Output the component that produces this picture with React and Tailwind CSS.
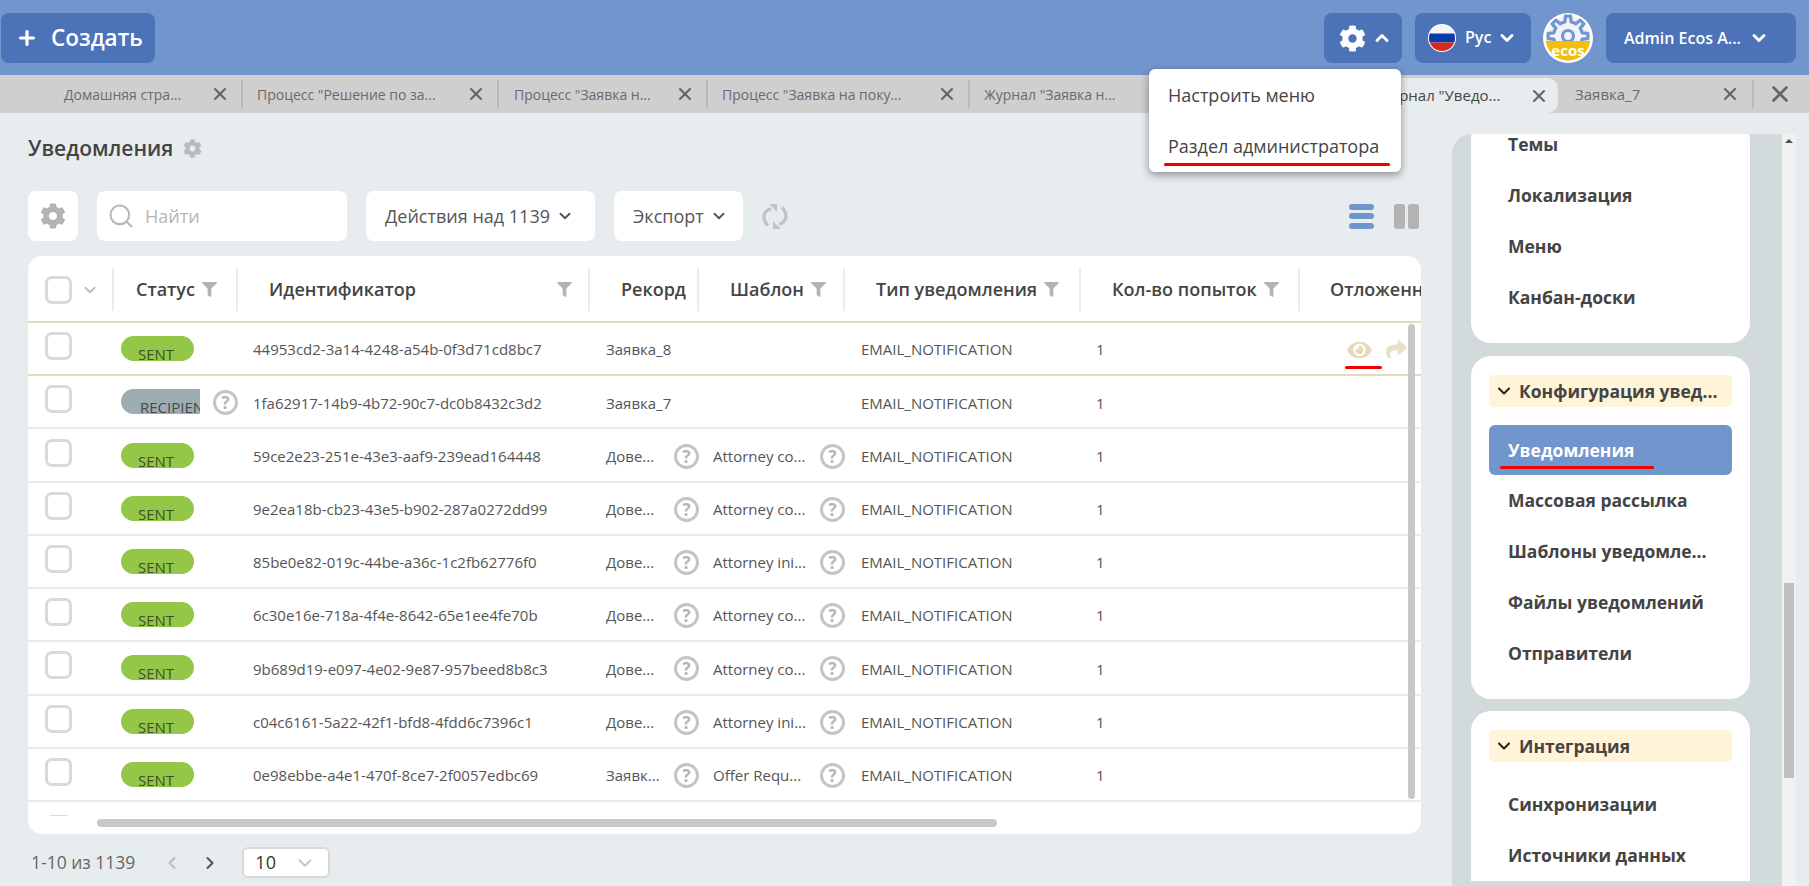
import React from "react";
import { FaCog, FaFilter, FaShare, FaEye } from "react-icons/fa";
import { ChevronDown, ChevronUp, ChevronLeft, ChevronRight, Plus, X, Search } from "lucide-react";

const FONT = { fontFamily: '"Open Sans", "Noto Sans", sans-serif' };

const COLS = "grid grid-cols-[86px_124px_352px_109px_146px_236px_219px_121px]";

const tabs = [
  { t: 'Домашняя стра...', w: "w-[243px]", pl: "pl-[64px]", x: "ml-auto mr-[11px]" },
  { t: 'Процесс "Решение по за...', w: "w-[256px]", pl: "pl-[14px]", x: "ml-auto mr-[11px]" },
  { t: 'Процесс "Заявка н...', w: "w-[209px]", pl: "pl-[15px]", x: "ml-auto mr-[11px]" },
  { t: 'Процесс "Заявка на поку...', w: "w-[262px]", pl: "pl-[14px]", x: "ml-auto mr-[11px]" },
  { t: 'Журнал "Заявка н...', w: "w-[395px]", pl: "pl-[14px]", x: "hidden" },
];

const rows = [
  { st: "SENT", id: "44953cd2-3a14-4248-a54b-0f3d71cd8bc7", rec: "Заявка_8", tpl: "", hi: true },
  { st: "RECIPIEN", id: "1fa62917-14b9-4b72-90c7-dc0b8432c3d2", rec: "Заявка_7", tpl: "" },
  { st: "SENT", id: "59ce2e23-251e-43e3-aaf9-239ead164448", rec: "Дове...", tpl: "Attorney co...", q: true },
  { st: "SENT", id: "9e2ea18b-cb23-43e5-b902-287a0272dd99", rec: "Дове...", tpl: "Attorney co...", q: true },
  { st: "SENT", id: "85be0e82-019c-44be-a36c-1c2fb62776f0", rec: "Дове...", tpl: "Attorney ini...", q: true },
  { st: "SENT", id: "6c30e16e-718a-4f4e-8642-65e1ee4fe70b", rec: "Дове...", tpl: "Attorney co...", q: true },
  { st: "SENT", id: "9b689d19-e097-4e02-9e87-957beed8b8c3", rec: "Дове...", tpl: "Attorney co...", q: true },
  { st: "SENT", id: "c04c6161-5a22-42f1-bfd8-4fdd6c7396c1", rec: "Дове...", tpl: "Attorney ini...", q: true },
  { st: "SENT", id: "0e98ebbe-a4e1-470f-8ce7-2f0057edbc69", rec: "Заявк...", tpl: "Offer Requ...", q: true },
];

function gearPath(cx, cy, rO, rI, teeth) {
  const pts = [];
  const step = (Math.PI * 2) / teeth;
  for (let i = 0; i < teeth; i++) {
    const a = i * step - Math.PI / 2;
    const p = (r, d) => `${(cx + r * Math.cos(a + d * step)).toFixed(2)} ${(cy + r * Math.sin(a + d * step)).toFixed(2)}`;
    pts.push(p(rI, -0.5), p(rI, -0.27), p(rO, -0.17), p(rO, 0.17), p(rI, 0.27));
  }
  return "M" + pts.join("L") + "Z";
}

function Help() {
  return (
    <span className="w-[25px] h-[25px] shrink-0 rounded-full border-[3px] border-[#c4c4c4] text-[#b5b5b5] flex items-center justify-center text-[17px] font-bold leading-none">?</span>
  );
}

function Checkbox() {
  return <span className="block w-[27px] h-[28px] rounded-[7px] border-[3px] border-[#d9d9d9] bg-white" />;
}

function Funnel({ className = "" }) {
  return <FaFilter className={"text-[#b3b3b3] w-[15px] h-[15px] " + className} />;
}

function HeaderCell({ label, pl, funnelMl }) {
  return (
    <div className={"h-[43px] flex items-center border-r-[2px] border-[#e7ecef] " + pl}>
      <span className="whitespace-nowrap">{label}</span>
      {funnelMl && <Funnel className={funnelMl} />}
    </div>
  );
}

function Row({ r }) {
  return (
    <div className={COLS + " h-[53.22px] pt-[2px] items-center border-b-[2px] text-[15px] text-[#555] " + (r.hi ? "border-[#e4dabb]" : "border-[#e7ecef]")}>
      <div className="pl-[17px] -mt-[7px]"><Checkbox /></div>
      <div className="pl-[7px] flex items-center">
        {r.st === "SENT" ? (
          <span className="w-[73px] h-[25px] rounded-[13px] bg-[#94c648] text-[#3f4f2a] pl-[17px] pt-[6px] leading-[24px] overflow-hidden -mt-[2px]">SENT</span>
        ) : (
          <>
            <span className="w-[80px] h-[25px] rounded-l-[13px] bg-[#9eadb1] text-[#3f4a4d] pl-[19px] pt-[6px] leading-[24px] overflow-hidden whitespace-nowrap -mt-[2px]">RECIPIENT</span>
            <span className="ml-[13px]"><Help /></span>
          </>
        )}
      </div>
      <div className="pl-[15px] whitespace-nowrap">{r.id}</div>
      <div className="pl-[16px] flex items-center whitespace-nowrap">
        <span className="w-[70px]">{r.rec}</span>
        {r.q && <Help />}
      </div>
      <div className="pl-[14px] flex items-center whitespace-nowrap">
        <span className="w-[108px]">{r.tpl}</span>
        {r.q && <Help />}
      </div>
      <div className="pl-[16px]">EMAIL_NOTIFICATION</div>
      <div className="pl-[15px]">1</div>
      <div className="relative h-full">
        {r.hi && (
          <>
            <FaEye className="absolute left-[47px] top-[14px] w-[25px] h-[22px] text-[#e4dabb]" />
            <FaShare className="absolute left-[86px] top-[14px] w-[21px] h-[21px] text-[#e9e0c6]" />
            <span className="absolute left-[45px] top-[41px] w-[37px] h-[3px] rounded-full bg-[#f00000]" />
          </>
        )}
      </div>
    </div>
  );
}

function SideItem({ children }) {
  return <div className="h-[51px] flex items-center pl-[37px] text-[17.5px] font-bold text-[#444] whitespace-nowrap">{children}</div>;
}

function SideHead({ children }) {
  return (
    <div className="mx-[18px] h-[32px] rounded-[5px] bg-[#fff4d8] flex items-center text-[17.5px] font-bold text-[#444] whitespace-nowrap">
      <ChevronDown className="w-[20px] h-[20px] ml-[5px] mr-[5px] text-[#222]" strokeWidth={2.5} />
      {children}
    </div>
  );
}

function HeaderButton({ className = "", children }) {
  return <div className={"h-[50px] rounded-[8px] bg-[#4c72b7] flex items-center text-white " + className}>{children}</div>;
}

function ToolButton({ className = "", children }) {
  return <div className={"h-[50px] rounded-[8px] bg-white flex items-center text-[18px] text-[#555] whitespace-nowrap " + className}>{children}</div>;
}

export default function App() {
  return (
    <div className="w-[1809px] h-[886px] overflow-hidden bg-[#e7ecef] flex flex-col relative" style={FONT}>
      <header className="h-[75px] shrink-0 bg-[#7195cd] flex items-start pt-[13px] pl-[1px] pr-[13px]">
        <HeaderButton className="w-[154px] pl-[15px]">
          <Plus className="w-[22px] h-[22px]" strokeWidth={3.5} />
          <span className="ml-[13px] text-[22.5px] font-semibold">Создать</span>
        </HeaderButton>
        <HeaderButton className="w-[78px] ml-auto pl-[15px]">
          <FaCog className="w-[27px] h-[27px]" />
          <ChevronUp className="w-[20px] h-[20px] ml-[6px]" strokeWidth={3.5} />
        </HeaderButton>
        <HeaderButton className="w-[116px] ml-[13px] pl-[13px]">
          <svg viewBox="0 0 28 28" className="w-[28px] h-[28px] shrink-0">
            <clipPath id="flag"><circle cx="14" cy="14" r="13" /></clipPath>
            <circle cx="14" cy="14" r="14" fill="#fff" />
            <g clipPath="url(#flag)">
              <rect x="0" y="0" width="28" height="9.5" fill="#f4f4f4" />
              <rect x="0" y="9.5" width="28" height="9" fill="#0a3aa8" />
              <rect x="0" y="18.5" width="28" height="10" fill="#d52b1e" />
            </g>
          </svg>
          <span className="ml-[9px] text-[16px] font-semibold -mt-[3px]">Рус</span>
          <ChevronDown className="w-[20px] h-[20px] ml-[6px]" strokeWidth={3.5} />
        </HeaderButton>
        <svg viewBox="0 0 50 50" className="w-[50px] h-[50px] ml-[12px] shrink-0">
          <clipPath id="logo"><circle cx="25" cy="25" r="22.5" /></clipPath>
          <circle cx="25" cy="25" r="25" fill="#fff" />
          <circle cx="25" cy="25" r="22.5" fill="#f1f3f6" />
          <path d={gearPath(25, 23, 20, 14.5, 8)} fill="none" stroke="#7195cd" strokeWidth="3.2" strokeLinejoin="round" />
          <circle cx="25" cy="23" r="5.5" fill="none" stroke="#7195cd" strokeWidth="3.2" />
          <g clipPath="url(#logo)">
            <rect x="0" y="28" width="50" height="22" fill="#f2bf0a" />
          </g>
          <text x="25" y="43" textAnchor="middle" fontSize="15" fill="#fff" fontWeight="700" fontFamily="Open Sans">ecos</text>
        </svg>
        <HeaderButton className="w-[190px] ml-[13px] pl-[18px]">
          <span className="text-[16px] font-semibold whitespace-nowrap">Admin Ecos A...</span>
          <ChevronDown className="w-[20px] h-[20px] ml-[8px]" strokeWidth={3.5} />
        </HeaderButton>
      </header>

      <nav className="h-[38px] shrink-0 bg-[#cfcfcf] flex items-center text-[14px] text-[#6b6b6b]">
        {tabs.map((t, i) => (
          <div key={i} className={"h-[28px] flex items-center border-r-[2px] border-[#b9b9b9] whitespace-nowrap " + t.w + " " + t.pl}>
            <span>{t.t}</span>
            <X className={"w-[20px] h-[20px] text-[#666] " + t.x} strokeWidth={2.5} />
          </div>
        ))}
        <div className="h-[35px] mt-[3px] w-[193px] shrink-0 bg-[#e7ecef] rounded-t-[10px] rounded-br-[10px] flex items-center pl-[14px] text-[#444] text-[15px] whitespace-nowrap">
          <span>Журнал "Уведо...</span>
          <X className="w-[20px] h-[20px] ml-auto mr-[9px] text-[#666]" strokeWidth={2.5} />
        </div>
        <div className="h-[28px] w-[196px] flex items-center pl-[17px] text-[15px] border-r-[2px] border-[#b9b9b9]">
          <span>Заявка_7</span>
          <X className="w-[20px] h-[20px] ml-auto mr-[12px] text-[#666]" strokeWidth={2.5} />
        </div>
        <X className="w-[26px] h-[26px] ml-[13px] text-[#666]" strokeWidth={2.5} />
      </nav>

      <main className="flex-1 flex min-h-0">
        <section className="w-[1452px] shrink-0 pl-[28px] pr-[31px]">
          <div className="h-[78px] pt-[21px] flex items-start">
            <h1 className="text-[21px] leading-[28px] font-semibold text-[#444]">Уведомления</h1>
            <FaCog className="w-[19px] h-[19px] ml-[10px] mt-[5px] text-[#b5bcc0]" />
          </div>

          <div className="flex items-center h-[50px]">
            <ToolButton className="w-[50px] justify-center">
              <FaCog className="w-[26px] h-[26px] text-[#b3b3b3]" />
            </ToolButton>
            <ToolButton className="w-[250px] ml-[19px] pl-[10px]">
              <Search className="w-[28px] h-[28px] text-[#b8b8b8]" strokeWidth={1.8} />
              <span className="ml-[10px] text-[#b5b5b5]">Найти</span>
            </ToolButton>
            <ToolButton className="w-[229px] ml-[19px] pl-[19px]">
              Действия над 1139
              <ChevronDown className="w-[18px] h-[18px] ml-[6px]" strokeWidth={2.5} />
            </ToolButton>
            <ToolButton className="w-[129px] ml-[19px] pl-[19px]">
              Экспорт
              <ChevronDown className="w-[18px] h-[18px] ml-[6px]" strokeWidth={2.5} />
            </ToolButton>
            <svg viewBox="0 0 26 27" className="w-[26px] h-[27px] ml-[19px]" fill="none" stroke="#bfc4c7" strokeWidth="3.4">
              <path d="M9 5.5C4.5 7 2 10 2 14c0 3 1.4 6 4 8.5" />
              <path d="M17 21.5c4.500-1.500 7-4.500 7-8.500 0-3-1.400-6-4-8.500" />
              <path d="M7 1h8v8z" fill="#bfc4c7" stroke="none" />
              <path d="M19 26h-8v-8z" fill="#bfc4c7" stroke="none" />
            </svg>
            <div className="ml-auto flex items-center">
              <div className="w-[25px] h-[25px] flex flex-col justify-between">
                <span className="h-[6px] rounded-[3px] bg-[#7195cd]" />
                <span className="h-[6px] rounded-[3px] bg-[#7195cd]" />
                <span className="h-[6px] rounded-[3px] bg-[#7195cd]" />
              </div>
              <div className="w-[25px] h-[25px] ml-[20px] mr-[2px] flex justify-between">
                <span className="w-[11px] rounded-[3px] bg-[#b3b3b3]" />
                <span className="w-[11px] rounded-[3px] bg-[#b3b3b3]" />
              </div>
            </div>
          </div>

          <div className="mt-[15px] h-[578px] rounded-[14px] bg-white overflow-hidden relative">
            <div className={COLS + " h-[67px] pt-[12px] text-[18px] font-semibold text-[#444] border-b-[2px] border-[#e4dabb]"}>
              <div className="h-[43px] flex items-center pl-[17px] border-r-[2px] border-[#e7ecef]">
                <Checkbox />
                <ChevronDown className="w-[18px] h-[18px] ml-[9px] text-[#bbb]" strokeWidth={2.5} />
              </div>
              <HeaderCell label="Статус" pl="pl-[22px]" funnelMl="ml-[7px]" />
              <HeaderCell label="Идентификатор" pl="pl-[31px]" funnelMl="ml-auto mr-[16px]" />
              <HeaderCell label="Рекорд" pl="pl-[31px]" />
              <HeaderCell label="Шаблон" pl="pl-[31px]" funnelMl="ml-[7px]" />
              <HeaderCell label="Тип уведомления" pl="pl-[31px]" funnelMl="ml-[7px]" />
              <HeaderCell label="Кол-во попыток" pl="pl-[31px]" funnelMl="ml-[7px]" />
              <div className="h-[43px] flex items-center pl-[30px] whitespace-nowrap overflow-hidden">Отложенные</div>
            </div>
            <div className="h-[493px] overflow-hidden">
              {rows.map((r, i) => <Row key={i} r={r} />)}
              <div className="pl-[17px] pt-[13px]"><Checkbox /></div>
            </div>
            <div className="absolute right-[6px] top-[68px] w-[7px] h-[475px] rounded-full bg-[#c8c8c8]" />
            <div className="absolute left-[69px] bottom-[7px] w-[900px] h-[8px] rounded-full bg-[#c8c8c8]" />
          </div>

          <div className="mt-[13px] flex items-center h-[31px]">
            <span className="ml-[3px] text-[17.5px] text-[#666] whitespace-nowrap">1-10 из 1139</span>
            <ChevronLeft className="w-[20px] h-[20px] ml-[27px] text-[#bbb]" strokeWidth={2.5} />
            <ChevronRight className="w-[20px] h-[20px] ml-[18px] text-[#555]" strokeWidth={2.5} />
            <div className="w-[88px] h-[31px] ml-[22px] rounded-[6px] border-[2px] border-[#d9d9d9] bg-white flex items-center pl-[11px] text-[18px] text-[#333]">
              10
              <ChevronDown className="w-[22px] h-[22px] ml-[18px] text-[#c4c4c4]" strokeWidth={2} />
            </div>
          </div>
        </section>

        <aside className="w-[344px] shrink-0 mt-[21px] flex">
          <div className="w-[330px] h-full rounded-tl-[20px] bg-[#d3dadc] overflow-hidden pl-[19px] pr-[32px]">
            <div className="-mt-[15px] rounded-[20px] bg-white pb-[20px]">
              <SideItem>Темы</SideItem>
              <SideItem>Локализация</SideItem>
              <SideItem>Меню</SideItem>
              <SideItem>Канбан-доски</SideItem>
            </div>
            <div className="mt-[13px] rounded-[20px] bg-white pt-[19px] pb-[20px]">
              <SideHead>Конфигурация увед...</SideHead>
              <div className="mx-[18px] mt-[18px] h-[50px] rounded-[6px] bg-[#7195cd] flex items-center pl-[19px] text-[17.5px] font-bold text-white relative">
                Уведомления
                <span className="absolute left-[11px] top-[41px] w-[154px] h-[3px] rounded-full bg-[#f00000]" />
              </div>
              <SideItem>Массовая рассылка</SideItem>
              <SideItem>Шаблоны уведомле...</SideItem>
              <SideItem>Файлы уведомлений</SideItem>
              <SideItem>Отправители</SideItem>
            </div>
            <div className="mt-[12px] rounded-t-[20px] bg-white pt-[19px]">
              <SideHead>Интеграция</SideHead>
              <div className="mt-[17px]">
                <SideItem>Синхронизации</SideItem>
                <SideItem>Источники данных</SideItem>
              </div>
            </div>
          </div>
          <div className="w-[14px] h-full bg-[#f1f1f1] relative">
            <span className="absolute left-[3px] top-[5px] w-0 h-0 border-l-[4px] border-r-[4px] border-b-[4px] border-l-transparent border-r-transparent border-b-[#505050]" />
            <span className="absolute left-[2px] top-[449px] w-[10px] h-[195px] bg-[#c1c1c1]" />
          </div>
        </aside>
      </main>

      <div className="absolute left-[1149px] top-[69px] w-[252px] h-[103px] rounded-[6px] bg-white shadow-[0_3px_8px_rgba(0,0,0,0.4)] text-[18px] text-[#444] pl-[19px] pt-[13px] whitespace-nowrap">
        <div className="h-[25px] leading-[25px] mt-[1px]">Настроить меню</div>
        <div className="h-[25px] leading-[25px] mt-[26px]">Раздел администратора</div>
        <span className="absolute left-[15px] top-[94px] w-[226px] h-[3px] rounded-full bg-[#f00000]" />
      </div>
    </div>
  );
}
